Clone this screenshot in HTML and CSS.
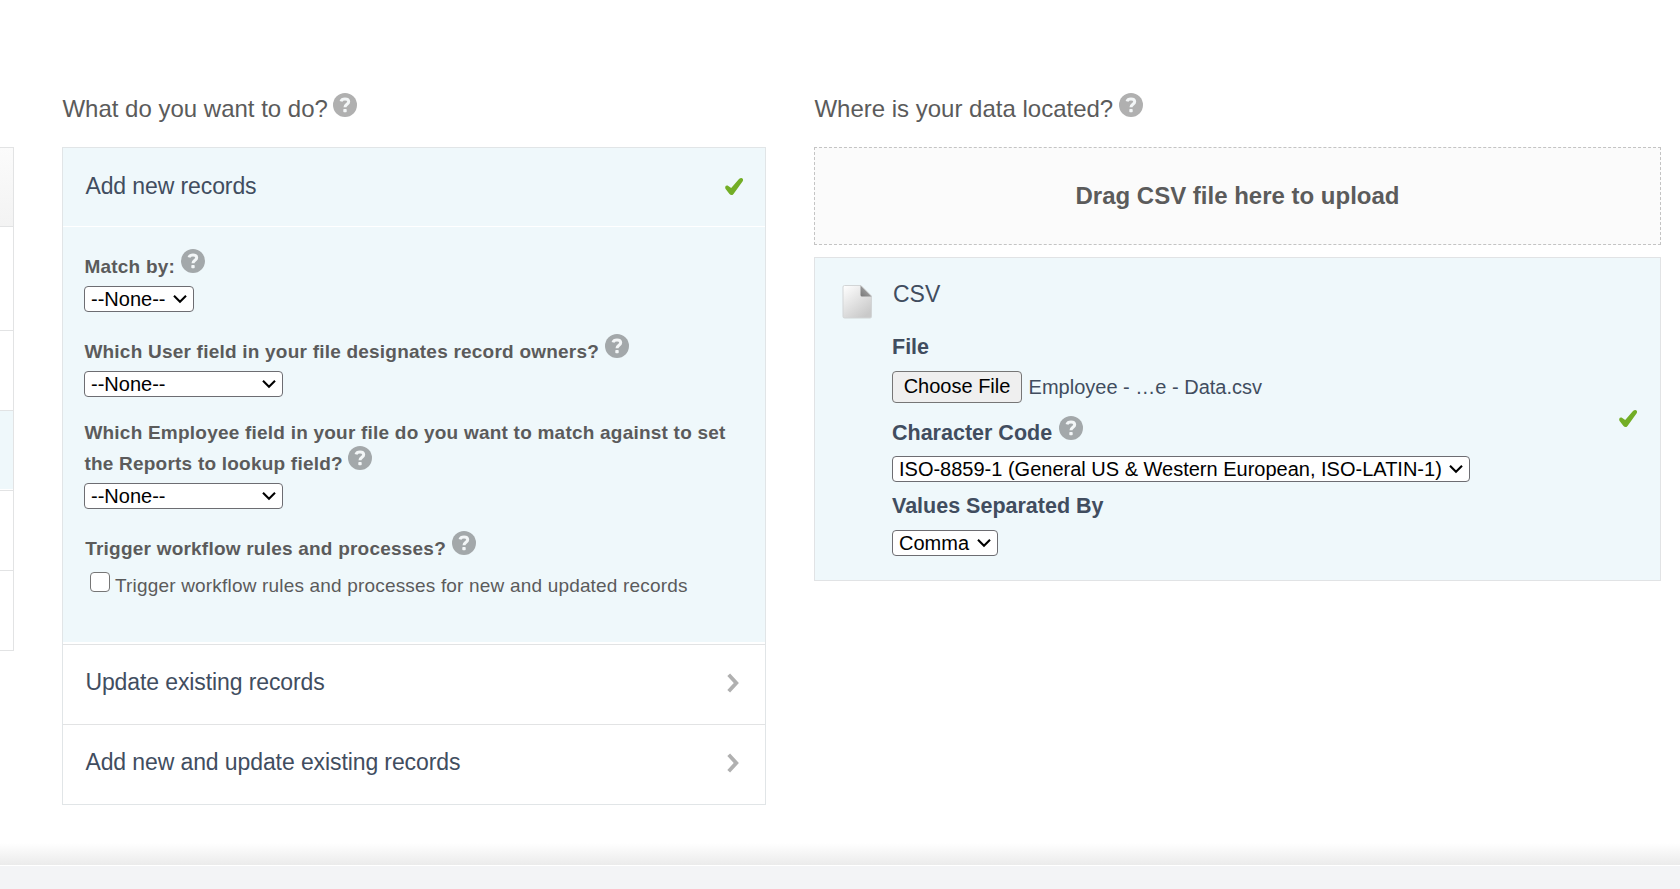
FILE: index.html
```
<!DOCTYPE html>
<html lang="en">
<head>
<meta charset="utf-8">
<title>Data Import</title>
<link rel="stylesheet" href="styles.css">
</head>
<body>
<svg class="sprite" aria-hidden="true">
  <symbol id="help" viewBox="0 0 24 24"><circle cx="12" cy="12" r="12"/><path d="M8 8.300C8.500 6.600 10 5.900 12 5.900c2.400 0 3.700 1.200 3.700 2.800 0 2.600-3.700 2.600-3.700 5.600" fill="none" stroke="#f3f6f7" stroke-width="3"/><rect x="10.300" y="16" width="3.400" height="3.200" rx=".8" fill="#f3f6f7"/></symbol>
  <symbol id="check" viewBox="0 0 18 18"><path d="M.3 8.800Q.6 7.200 2.600 7.400L6.200 10 14 1Q16.500-.8 17.900 1 18.300 2.400 17.500 3.600L8.500 15.900Q6.500 18.200 4.500 16L.6 11Q0 10 .3 8.800Z" fill="#73ae26"/></symbol>
  <symbol id="next" viewBox="0 0 12 20"><path d="M1.700 1.800 9.300 10 1.700 18.200" fill="none" stroke="#b0b0b0" stroke-width="3.800"/></symbol>
  <symbol id="down" viewBox="0 0 14 10"><path d="M1 1.800 7 7.800 13 1.800" fill="none" stroke="#000" stroke-width="2.100"/></symbol>
</svg>
<main class="wizard">
  <aside class="objects">
    <div class="tab"></div><div class="tall"></div><div></div><div class="on"></div><div></div><div></div>
  </aside>
  <section class="action">
    <h2><span class="t">What do you want to do?</span><svg class="help"><use href="#help"/></svg></h2>
    <div class="accordion">
      <header class="row on"><span class="t">Add new records</span><svg class="check"><use href="#check"/></svg></header>
      <div class="body">
        <div class="field"><label><span class="t">Match by:</span><svg class="help"><use href="#help"/></svg></label>
          <div class="select w110"><select><option>--None--</option></select><svg><use href="#down"/></svg></div></div>
        <div class="field"><label><span class="t">Which User field in your file designates record owners?</span><svg class="help"><use href="#help"/></svg></label>
          <div class="select w199"><select><option>--None--</option></select><svg><use href="#down"/></svg></div></div>
        <div class="field two-line"><label><span class="t">Which Employee field in your file do you want to match against to set</span><br><span class="t">the Reports to lookup field?</span><svg class="help"><use href="#help"/></svg></label>
          <div class="select w199"><select><option>--None--</option></select><svg><use href="#down"/></svg></div></div>
        <div class="field trigger"><label><span class="t">Trigger workflow rules and processes?</span><svg class="help"><use href="#help"/></svg></label>
          <div class="option"><i class="box"></i><span class="t">Trigger workflow rules and processes for new and updated records</span></div></div>
      </div>
      <header class="row"><span class="t">Update existing records</span><svg class="next"><use href="#next"/></svg></header>
      <header class="row"><span class="t">Add new and update existing records</span><svg class="next"><use href="#next"/></svg></header>
    </div>
  </section>
  <section class="source">
    <h2><span class="t">Where is your data located?</span><svg class="help"><use href="#help"/></svg></h2>
    <div class="drop"><span class="t">Drag CSV file here to upload</span></div>
    <div class="card">
      <svg class="file" viewBox="0 0 32 36"><defs><linearGradient id="paper" x1="0" y1="0" x2=".7" y2="1"><stop offset="0" stop-color="#fff"/><stop offset="1" stop-color="#c9c9c9"/></linearGradient><linearGradient id="fold" x1="0" y1="1" x2="1" y2="0"><stop offset="0" stop-color="#777"/><stop offset="1" stop-color="#b5b5b5"/></linearGradient></defs><path d="M3.500 1.500H20L30.500 12V32.500Q30.500 34 29 34H3.500Q2 34 2 32.500V3Q2 1.500 3.500 1.500Z" fill="url(#paper)" stroke="#d2d5d6"/><path d="M19.500 1.500 30.500 12.500H21Q19.500 12.500 19.500 11Z" fill="url(#fold)"/></svg>
      <div class="form">
        <div class="name"><span class="t">CSV</span></div>
        <div class="lab file-label"><span class="t">File</span></div>
        <div class="picker"><button><span class="t">Choose File</span></button><span class="t">Employee - …e - Data.csv</span></div>
        <div class="lab code-label"><span class="t">Character Code</span><svg class="help"><use href="#help"/></svg></div>
        <div class="select w578"><select><option>ISO-8859-1 (General US &amp; Western European, ISO-LATIN-1)</option></select><svg><use href="#down"/></svg></div>
        <div class="lab values-label"><span class="t">Values Separated By</span></div>
        <div class="select w106"><select><option>Comma</option></select><svg><use href="#down"/></svg></div>
      </div>
      <svg class="check"><use href="#check"/></svg>
    </div>
  </section>
</main>
<footer></footer>
</body>
</html>
```
FILE: styles.css
```
* { box-sizing: border-box; }
body { margin: 0; height: 889px; overflow: hidden; display: flex; flex-direction: column; background: #fff; font-family: Arial, "Liberation Sans", sans-serif; color: #5b5b5b; }
.sprite { position: absolute; width: 0; height: 0; }
.t { white-space: nowrap; }

.wizard { flex: 1; display: flex; align-items: flex-start; background: linear-gradient(#fff, #ebebeb) bottom / 100% 22px no-repeat; }
.objects { width: 14px; margin-top: 147px; border: 1px solid #e2e3e4; border-left: 0; }
.objects div { height: 80px; border-bottom: 1px solid #e2e3e4; }
.objects .tab { height: 79px; background: linear-gradient(#fbfbfb, #f3f3f3); }
.objects .tall { height: 104px; }
.objects .on { background: #eff8fb; box-shadow: inset 0 -1px #fff; }
.objects div:last-child { height: 79px; border: 0; }

h2 { display: flex; height: 54px; margin: 0; padding-left: .4px; font-size: 24px; font-weight: 400; line-height: 32px; }
svg.help { width: 24px; height: 24px; fill: #a3a8aa; flex: none; }
h2 svg.help { margin-left: 5.500px; fill: #b0b0b0; }
.action { width: 704px; margin: 93px 0 0 48px; }
.source { width: 847px; margin: 93px 0 0 48px; }

.accordion { border: 1px solid #e1e5e7; }
.row { display: flex; justify-content: space-between; align-items: center; height: 80px; padding: 0 26.500px 3px 22.400px; border-top: 1px solid #e2e3e4; font-size: 23px; letter-spacing: -.1px; color: #414d5f; }
.row.on { height: 79px; padding-right: 22px; padding-bottom: 0; border-top: 0; border-bottom: 1px solid #fff; background: #eff8fb; }
.row .t { line-height: 28px; margin-bottom: 3px; }
.check { width: 18px; height: 18px; flex: none; }
.next { width: 12px; height: 20px; }

.body { display: flex; flex-direction: column; gap: 22px; height: 417px; padding: 22px 21px 0; border-bottom: 2px solid #fff; background: #eff8fb; }
.field { font-size: 19px; }
.field label { display: block; height: 37px; padding-left: .4px; line-height: 27px; font-weight: 700; letter-spacing: .22px; }
.two-line label { height: 64px; }
.trigger label { height: 41px; padding-left: 1.200px; }
.field .help { margin-left: 5.500px; vertical-align: baseline; }

.select { display: grid; height: 26px; align-items: center; }
.select select { grid-area: 1 / 1; width: 100%; height: 26px; margin: 0; padding: 0 0 1px 6px; appearance: none; border: 1px solid #6d6d72; border-radius: 4px; background: #fff; color: #000; font: 20px/24px Arial, "Liberation Sans", sans-serif; }
.select svg { grid-area: 1 / 1; justify-self: end; width: 14px; height: 10px; margin-right: 7px; pointer-events: none; }
.w110 { width: 110px; }
.w199 { width: 199px; }
.w578 { width: 578px; }
.w106 { width: 106px; }
.option { display: flex; line-height: 24px; padding-left: 6px; letter-spacing: .18px; }
.option .t { margin-top: 2px; }
.box { width: 20px; height: 20px; margin-right: 5px; border: 1.500px solid #767676; border-radius: 4px; background: #fff; }

.drop { display: grid; place-items: center; height: 98px; border: 1px dashed #c4c4c4; background: #fbfbfb; font-size: 24px; font-weight: 700; }
.card { display: flex; height: 324px; margin-top: 12px; padding: 22px 23px 0 26px; border: 1px solid #e1e3e5; background: #eff8fb; color: #414d5f; }
.file { width: 32px; height: 36px; margin-top: 4px; }
.form { flex: 1; padding-left: 19px; }
.card > .check { margin-top: 130px; }
.name { font-size: 23px; line-height: 28px; padding-left: 1px; }
.lab { display: flex; font-size: 21.500px; line-height: 28px; font-weight: 700; }
.file-label { height: 38px; margin-top: 25px; }
.code-label { height: 40px; margin-top: 13px; }
.code-label .t { margin-top: 3px; }
.code-label .help { margin-left: 7px; }
.values-label { height: 38px; margin-top: 10px; }
.picker { display: flex; align-items: center; gap: 6.600px; font-size: 20px; }
.picker button { width: 130px; height: 32px; padding: 0 0 2px; border: 1px solid #767676; border-radius: 4px; background: #efefef; color: #000; font: 20px Arial, "Liberation Sans", sans-serif; }

footer { height: 24px; border-top: 1px solid #fff; background: #f3f4f6; }
```
